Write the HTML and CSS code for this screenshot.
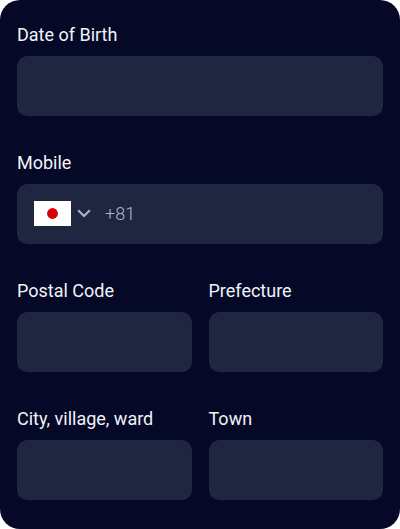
FILE: index.html
```html
<!DOCTYPE html>
<html lang="en">
<head>
    <meta charset="UTF-8">
    <meta name="viewport" content="width=device-width, initial-scale=1.0">
    <title>Address details</title>
    <link rel="stylesheet" href="styles.css">
</head>
<body>
    <form class="form-card">
        <div class="field">
            <label>Date of Birth</label>
            <div class="input-box"></div>
        </div>
        <div class="field">
            <label>Mobile</label>
            <div class="input-box phone-box">
                <svg class="flag" viewBox="0 0 37 25" aria-hidden="true">
                    <rect width="37" height="25" fill="#fff"/>
                    <circle cx="18.5" cy="12.5" r="5.4" fill="#d80000"/>
                </svg>
                <svg class="chevron" viewBox="0 0 14 9" aria-hidden="true">
                    <path d="M1.2 1.2 7 7l5.8-5.8" fill="none" stroke="#a9b6cc" stroke-width="2"/>
                </svg>
                <span class="dial-code">+81</span>
            </div>
        </div>
        <div class="field-row">
            <div class="field">
                <label>Postal Code</label>
                <div class="input-box"></div>
            </div>
            <div class="field">
                <label>Prefecture</label>
                <div class="input-box"></div>
            </div>
        </div>
        <div class="field-row">
            <div class="field">
                <label>City, village, ward</label>
                <div class="input-box"></div>
            </div>
            <div class="field">
                <label>Town</label>
                <div class="input-box"></div>
            </div>
        </div>
    </form>
</body>
</html>
```

FILE: styles.css
```css
* {
    margin: 0;
    padding: 0;
    box-sizing: border-box;
    font-family: Roboto, sans-serif;
}

body {
    width: 400px;
    height: 529px;
    background: #fff;
    overflow: hidden;
}

.form-card {
    height: 529px;
    padding: 24px 17px 0;
    display: flex;
    flex-direction: column;
    gap: 36.5px;
    background: #050826;
    border-radius: 20px;
}

.field-row {
    display: grid;
    grid-template-columns: 1fr 1fr;
    gap: 17px;
}

.field label {
    display: block;
    height: 32px;
    line-height: 22px;
    font-size: 18px;
    font-weight: 450;
    color: #f1f3f7;
}

.input-box {
    height: 59.5px;
    background: #1f2740;
    border-radius: 10px;
}

.phone-box {
    display: flex;
    align-items: center;
    padding-left: 17px;
}

.flag {
    width: 37px;
    height: 25px;
}

.chevron {
    width: 14px;
    height: 9px;
    margin-left: 6px;
}

.dial-code {
    margin-left: 14px;
    font-size: 18px;
    font-weight: 300;
    color: #a9b6cc;
}
```
